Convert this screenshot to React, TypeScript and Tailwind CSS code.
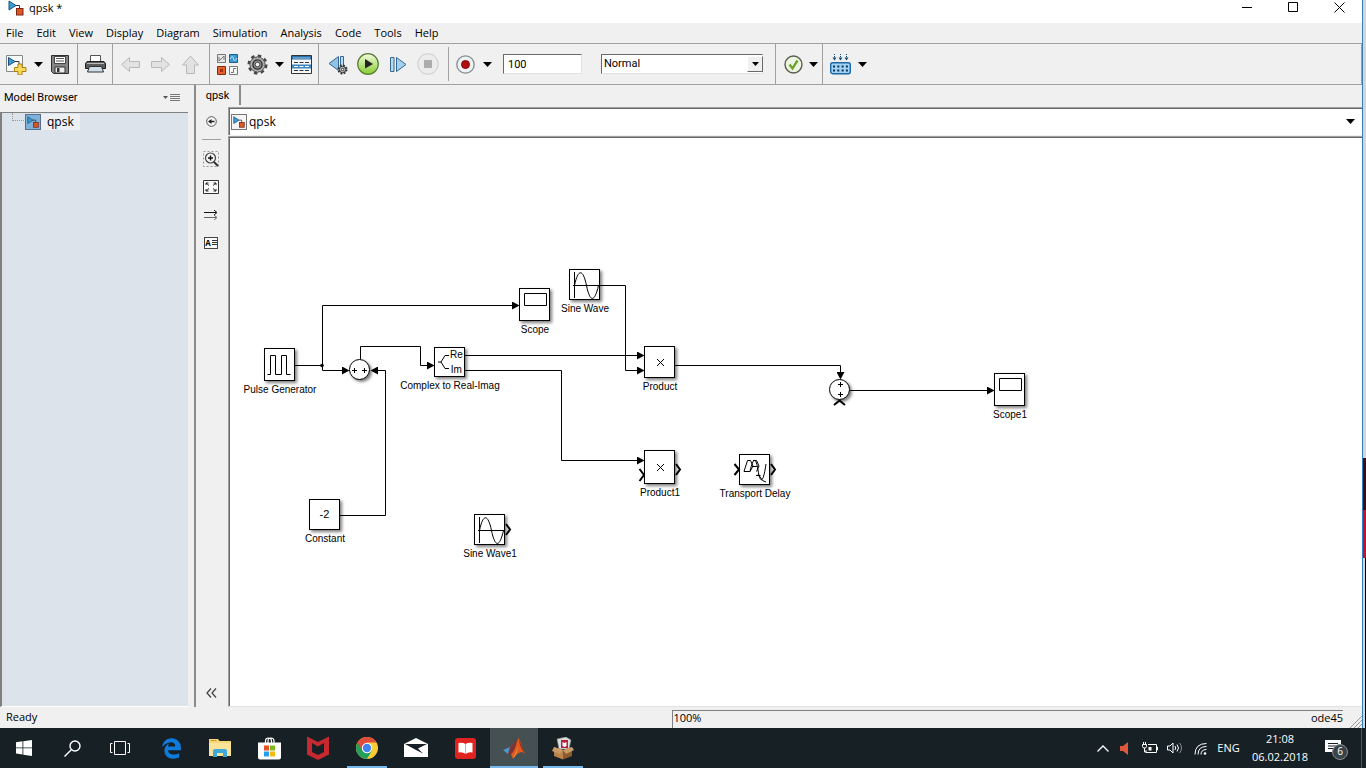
import type { ReactNode } from 'react'
import { FaEdgeLegacy } from 'react-icons/fa'

const MENUS = [
  'File',
  'Edit',
  'View',
  'Display',
  'Diagram',
  'Simulation',
  'Analysis',
  'Code',
  'Tools',
  'Help',
]

/* ---------- Shared bits ---------- */

function ModelIcon({ size = 15 }: { size?: number }) {
  return (
    <svg width={size} height={size} viewBox="0 0 16 16" className="shrink-0">
      <path d="M1 1v9l7-4.5z" fill="#3d9bd1" stroke="#1b557d" />
      <path d="M7.5 5.5h4V9" fill="none" stroke="#333" />
      <rect x="8.5" y="8.5" width="6.5" height="6.5" fill="#d9582b" stroke="#7c2410" />
    </svg>
  )
}

function BoxedModelIcon({ active = false }: { active?: boolean }) {
  return (
    <span
      className={`flex h-4 w-4 shrink-0 items-center justify-center border ${
        active ? 'border-[#56718c] bg-[#7fb0da]' : 'border-[#777] bg-[#f4f4f4]'
      }`}
    >
      <ModelIcon size={12} />
    </span>
  )
}

function Caret() {
  return (
    <svg width="9" height="5" viewBox="0 0 9 5">
      <path d="M0 0h9L4.5 5z" fill="#000" />
    </svg>
  )
}

function Tool({ label, wide, children }: { label: string; wide?: boolean; children: ReactNode }) {
  return (
    <button
      type="button"
      aria-label={label}
      className={`flex h-8 shrink-0 items-center justify-center ${wide ? 'w-[30px]' : 'w-6'}`}
    >
      {children}
    </button>
  )
}

function CaretTool({ label, narrow }: { label: string; narrow?: boolean }) {
  return (
    <button
      type="button"
      aria-label={label}
      className={`flex h-8 shrink-0 items-center justify-center ${narrow ? 'w-4' : 'w-5'}`}
    >
      <Caret />
    </button>
  )
}

/* ---------- Title bar + menu ---------- */

function TitleBar() {
  return (
    <header className="flex h-[23px] shrink-0 items-start overflow-hidden bg-white">
      <div className="flex flex-1 items-center gap-[5px] pl-2">
        <ModelIcon size={16} />
        <h1 className="text-[11px] leading-4">qpsk *</h1>
      </div>
      <button type="button" aria-label="Minimize" className="flex h-4 w-[46px] items-center justify-center">
        <svg width="10" height="10"><path d="M0 4.5h10" stroke="#000" /></svg>
      </button>
      <button type="button" aria-label="Maximize" className="flex h-[15px] w-[46px] items-center justify-center">
        <svg width="11" height="11"><path d="M.5.5h9v9h-9z" fill="none" stroke="#000" /></svg>
      </button>
      <button type="button" aria-label="Close" className="flex h-[15px] w-[46px] items-center justify-center">
        <svg width="11" height="11"><path d="M.5.5l10 10M10.5.5l-10 10" stroke="#000" /></svg>
      </button>
    </header>
  )
}

function MenuBar() {
  return (
    <nav className="flex h-5 shrink-0 items-center gap-[13px] pl-1.5">
      {MENUS.map(menu => (
        <button key={menu} type="button" className="text-[11px] leading-4">
          {menu}
        </button>
      ))}
    </nav>
  )
}

/* ---------- Toolbar ---------- */

function GearIcon({ size = 21 }: { size?: number }) {
  return (
    <svg width={size} height={size} viewBox="0 0 22 22">
      <circle cx="11" cy="11" r="9" fill="none" stroke="#444" strokeWidth="3" strokeDasharray="3.6 3.47" />
      <circle cx="11" cy="11" r="8" fill="#a9a9a9" stroke="#555" />
      <circle cx="11" cy="11" r="4.8" fill="#8b8b8b" stroke="#333" strokeWidth="1.4" />
      <circle cx="11" cy="11" r="2.4" fill="#f3f3f3" stroke="#444" />
    </svg>
  )
}

function BlockArrow({ d }: { d: string }) {
  return (
    <svg width="19" height="19" viewBox="0 0 19 19">
      <path d={d} fill="#e2e2e2" stroke="#b9b9b9" strokeLinejoin="round" />
    </svg>
  )
}

function Toolbar() {
  return (
    <div className="flex h-[42px] shrink-0 border-y border-r border-[#a0a0a0] bg-[#f0f0f0]">
      <div className="flex w-[78px] shrink-0 items-center border-r border-[#a0a0a0] pl-1">
        <Tool label="New model">
          <svg width="22" height="22" viewBox="0 0 22 22">
            <path d="M1.5 2.5h16v16h-16z" fill="#f7f9fb" stroke="#888" />
            <path d="M3.500 4.500v8l6.500-4z" fill="#3d9bd1" stroke="#1b557d" />
            <path d="M10 8.500h4v3" fill="none" stroke="#333" />
            <path d="M13 11h4v3.500h4v4h-4V22h-4v-3.500H9.500v-4H13z" fill="#fbd85a" stroke="#a98314" />
          </svg>
        </Tool>
        <CaretTool label="New options" />
        <Tool label="Save">
          <svg width="18" height="19" viewBox="0 0 18 19">
            <path d="M.5.5h17v18H2.500l-2-2z" fill="#858585" stroke="#2e2e2e" />
            <path d="M3.500 1.500h11v7h-11z" fill="#fff" stroke="#444" />
            <path d="M5 3.500h8M5 6h8" stroke="#555" />
            <path d="M4 12h10v6H4z" fill="#ededed" stroke="#333" />
            <path d="M6 13h2.500v4H6z" fill="#333" />
          </svg>
        </Tool>
      </div>

      <div className="flex w-[35px] shrink-0 items-center justify-center border-r border-[#a0a0a0]">
        <Tool label="Print">
          <svg width="21" height="20" viewBox="0 0 21 20">
            <path d="M5.500 8V1.500h10V8" fill="#fff" stroke="#555" />
            <path d="M2 7.500h17l1.500 2v5H.5v-5z" fill="#5b5b5b" stroke="#1d1d1d" />
            <path d="M2 9.500h17" stroke="#bbb" />
            <path d="M4.500 12.500h12l2 5.500H2.500z" fill="#cfdde8" stroke="#333" />
          </svg>
        </Tool>
      </div>

      <div className="flex w-[97px] shrink-0 items-center border-r border-[#a0a0a0] pl-0.5">
        <Tool label="Back" wide>
          <BlockArrow d="M.5 9.500l8-7v4h10v6h-10v4z" />
        </Tool>
        <Tool label="Forward" wide>
          <BlockArrow d="M18.500 9.500l-8-7v4H.5v6h10v4z" />
        </Tool>
        <Tool label="Up to parent" wide>
          <BlockArrow d="M9.500 1l8 9h-4v8.500h-8V10h-4z" />
        </Tool>
      </div>

      <div className="flex w-[109px] shrink-0 items-center border-r border-[#a0a0a0] pl-[5px]">
        <Tool label="Library browser">
          <svg width="21" height="21" viewBox="0 0 21 21">
            <path d="M.5.5h8v8h-8z" fill="#e7e7e7" stroke="#777" />
            <path d="M2 7V3m0 4l5-5v4" fill="none" stroke="#777" />
            <path d="M12.500.5h8v8h-8z" fill="#3c9ad0" stroke="#1d5f8c" />
            <path d="M13 5c2-4 3.500-2 3.500 0S19 7 20 4" fill="none" stroke="#c7ecff" />
            <path d="M.5 12.500h8v8h-8z" fill="#e3602f" stroke="#8b2a10" />
            <path d="M3 15h3v3H3z" fill="#a5300f" />
            <path d="M12.500 12.500h8v8h-8z" fill="#f7f7f7" stroke="#777" />
            <path d="M14 18.500h2.500v-4H19" fill="none" stroke="#777" />
          </svg>
        </Tool>
        <span className="w-1.5" />
        <Tool label="Model configuration">
          <GearIcon />
        </Tool>
        <CaretTool label="Configuration options" />
        <Tool label="Model explorer">
          <svg width="21" height="19" viewBox="0 0 21 19">
            <path d="M.5.5h20v18H.5z" fill="#f5f8fa" stroke="#333" />
            <path d="M1 1h19v3.500H1z" fill="#2d6fa8" />
            <path d="M2 3h17" stroke="#9ac6e8" />
            <path d="M3 7.500h4m1.500 0h4m1.500 0h4M3 15.500h4m1.500 0h4m1.500 0h4" stroke="#333" />
            <path d="M1 9.500h19v4H1z" fill="#3d86bf" />
            <path d="M3 11.500h4m1.500 0h4m1.500 0h4" stroke="#fff" />
          </svg>
        </Tool>
      </div>

      <div className="flex w-[129px] shrink-0 items-center pl-1">
        <Tool label="Step back" wide>
          <svg width="20" height="21" viewBox="0 0 20 21">
            <path d="M10.500 2.500v14L1 9.500z" fill="#8fc3e8" stroke="#36688f" />
            <path d="M12.500 2.500h3v14h-3z" fill="#b9dcf3" stroke="#36688f" />
            <circle cx="14.500" cy="15.500" r="4" fill="#ddd" stroke="#333" strokeWidth="2" strokeDasharray="1.800 1.350" />
            <circle cx="14.500" cy="15.500" r="3.200" fill="#bbb" stroke="#333" />
            <circle cx="14.500" cy="15.500" r="1.200" fill="#fff" stroke="#333" />
          </svg>
        </Tool>
        <Tool label="Run" wide>
          <svg width="22" height="22" viewBox="0 0 22 22">
            <defs>
              <linearGradient id="run" x1="0" y1="0" x2="0" y2="1">
                <stop offset="0" stopColor="#f3fbe0" />
                <stop offset="1" stopColor="#86cc2e" />
              </linearGradient>
            </defs>
            <circle cx="11" cy="11" r="10.300" fill="url(#run)" stroke="#587f34" strokeWidth="1.200" />
            <path d="M8 6v9.500L16 11z" fill="#222" />
          </svg>
        </Tool>
        <Tool label="Step forward" wide>
          <svg width="17" height="17" viewBox="0 0 17 17">
            <path d="M.5 1.500h3.500v14H.5z" fill="#b9dcf3" stroke="#36688f" />
            <path d="M6.500 1.500v14L16 8.500z" fill="#a5d1f0" stroke="#36688f" />
          </svg>
        </Tool>
        <Tool label="Stop" wide>
          <svg width="22" height="22" viewBox="0 0 22 22">
            <circle cx="11" cy="11" r="10.300" fill="#ececec" stroke="#cbcbcb" />
            <path d="M7 7h8v8H7z" fill="#adadad" />
          </svg>
        </Tool>
      </div>

      <div className="flex w-[328px] shrink-0 items-center border-r border-[#a0a0a0] font-[Roboto,sans-serif]">
        <span className="h-[34px] w-px bg-[#a0a0a0]" />
        <span className="w-1" />
        <Tool label="Record">
          <svg width="19" height="19" viewBox="0 0 19 19">
            <circle cx="9.500" cy="9.500" r="8.700" fill="#eef1f2" stroke="#7f8a90" strokeWidth="1.300" />
            <circle cx="9.500" cy="9.500" r="4" fill="#b30f0f" stroke="#7d0a0a" />
          </svg>
        </Tool>
        <CaretTool label="Record options" />
        <input
          type="text"
          aria-label="Stop time"
          defaultValue="100"
          className="ml-1.5 h-5 w-[79px] border border-[#e3e3e3] border-l-[#696969] border-t-[#696969] bg-white pl-1 text-[11px] outline-none"
        />
        <div className="relative ml-[19px] w-[162px]">
          <select
            aria-label="Simulation mode"
            className="block h-5 w-full appearance-none border border-[#e3e3e3] border-l-[#696969] border-t-[#696969] bg-white pl-0.5 text-[11px] outline-none"
          >
            <option>Normal</option>
          </select>
          <span className="pointer-events-none absolute right-0 top-0.5 flex h-4 w-4 items-center justify-center border border-white border-b-[#696969] border-r-[#696969] bg-[#f0f0f0]">
            <svg width="7" height="4"><path d="M0 0h7L3.500 4z" /></svg>
          </span>
        </div>
      </div>

      <div className="flex w-[47px] shrink-0 items-center border-r border-[#a0a0a0] pl-[5px]">
        <Tool label="Model advisor">
          <svg width="19" height="19" viewBox="0 0 19 19">
            <circle cx="9.500" cy="9.500" r="8.500" fill="#eef4e4" stroke="#55604a" strokeWidth="1.400" />
            <path d="M5.500 9.500l3 4 5-8" fill="none" stroke="#6ea32c" strokeWidth="2.400" />
          </svg>
        </Tool>
        <CaretTool label="Advisor options" narrow />
      </div>

      <div className="flex items-center pl-[5px]">
        <Tool label="Build model">
          <svg width="21" height="21" viewBox="0 0 21 21">
            <path d="M4.500 0v5m6-5v5m6-5v5" stroke="#14456f" strokeDasharray="1 1" />
            <path d="M2.500 3.500h4l-2 3zm6 0h4l-2 3zm6 0h4l-2 3z" fill="#14456f" />
            <rect x=".7" y="8.700" width="19.600" height="11" rx="2" fill="#9fd3f7" stroke="#2167a0" strokeWidth="1.400" />
            <path d="M3 12.500h15M3 16.500h15" stroke="#12324e" strokeWidth="2" strokeDasharray="2 2.300" />
          </svg>
        </Tool>
        <CaretTool label="Build options" />
      </div>
    </div>
  )
}

/* ---------- Model browser ---------- */

function ModelBrowser() {
  return (
    <aside className="flex w-[194px] shrink-0 flex-col">
      <div className="flex h-[27px] shrink-0 items-center justify-between pb-0.5 pl-1 pr-3.5">
        <h2 className="font-[Roboto,sans-serif] text-[11px] leading-4">Model Browser</h2>
        <button type="button" aria-label="Browser options">
          <svg width="17" height="8" viewBox="0 0 17 8">
            <path d="M0 2h5L2.500 5z" fill="#555" />
            <path d="M7 .5h10M7 2.500h10M7 4.500h10M7 6.500h10" stroke="#777" />
          </svg>
        </button>
      </div>
      <div className="mr-1.5 flex-1 border-b border-l-2 border-t border-[#808080] border-b-white bg-[#dce3eb]">
        <div className="flex h-[18px] items-center pl-2.5">
          <span className="h-2 w-3 self-start border-b border-l border-dotted border-[#999]" />
          <span className="ml-px">
            <BoxedModelIcon active />
          </span>
          <span className="bg-[#eceff3] px-1.5 text-xs leading-4">qpsk</span>
        </div>
      </div>
    </aside>
  )
}

/* ---------- Palette ---------- */

function Palette() {
  return (
    <div className="flex w-8 shrink-0 flex-col items-center pb-1.5 pr-0.5">
      <button type="button" aria-label="Hide browser" className="flex h-7 w-6 items-center justify-center">
        <svg width="11" height="11" viewBox="0 0 11 11">
          <circle cx="5.500" cy="5.500" r="4.800" fill="#f8f8f8" stroke="#555" />
          <path d="M8.500 5.500H3" stroke="#222" strokeWidth="1.500" />
          <path d="M2 5.500L5.500 3v5z" fill="#222" />
        </svg>
      </button>
      <span className="mb-[5px] mt-1 h-px w-[19px] bg-[#a0a0a0]" />
      <button type="button" aria-label="Zoom" className="flex h-7 w-6 items-center justify-center">
        <svg width="16" height="16" viewBox="0 0 16 16">
          <path d="M.5.5h15v15H.5z" fill="none" stroke="#999" strokeDasharray="2 2" />
          <circle cx="7.500" cy="7" r="5" fill="#f6f6f6" stroke="#444" strokeWidth="1.200" />
          <path d="M5 7h5M7.500 4.500v5" stroke="#111" strokeWidth="1.400" />
          <path d="M11 11l4 4" stroke="#333" strokeWidth="2" />
        </svg>
      </button>
      <button type="button" aria-label="Fit to view" className="flex h-7 w-6 items-center justify-center">
        <svg width="16" height="14" viewBox="0 0 16 14">
          <path d="M.5.5h15v13H.5z" fill="#fafafa" stroke="#333" />
          <path d="M3 5V3h2.500M10.500 3H13v2M13 9v2h-2.500M5.500 11H3V9" fill="none" stroke="#222" />
          <path d="M3 3l3 2.500M13 3l-3 2.500M3 11l3-2.500M13 11l-3-2.500" stroke="#222" />
        </svg>
      </button>
      <button type="button" aria-label="Signal labels" className="flex h-7 w-6 items-center justify-center">
        <svg width="14" height="10" viewBox="0 0 14 10">
          <path d="M0 2.500h12M10 0l3 2.500L10 5" fill="none" stroke="#111" />
          <path d="M0 7.500h12M10 5l3 2.500L10 10" fill="none" stroke="#666" />
        </svg>
      </button>
      <button type="button" aria-label="Annotation" className="flex h-7 w-6 items-center justify-center">
        <span className="flex h-3 w-3.5 items-center justify-center gap-px border border-[#444] bg-[#fafafa]">
          <span className="text-[8px] font-bold leading-none">A</span>
          <svg width="5" height="6"><path d="M0 .5h5M0 2.500h5M0 4.500h5" stroke="#333" /></svg>
        </span>
      </button>
      <span className="flex-1" />
      <button type="button" aria-label="Collapse palette" className="flex h-4 w-6 items-center justify-center">
        <svg width="11" height="10"><path d="M5 .5L1 5l4 4.500M10 .5L6 5l4 4.500" fill="none" stroke="#444" strokeWidth="1.300" /></svg>
      </button>
    </div>
  )
}

/* ---------- Diagram ---------- */

type Kind = 'pulse' | 'sum-h' | 'sum-v' | 'complex' | 'scope' | 'sine' | 'product' | 'delay' | 'constant'

interface Block {
  id: string
  kind: Kind
  x: number
  y: number
  h: number
  label?: string
}

const BLOCKS: Block[] = [
  { id: 'pulse', kind: 'pulse', x: 34, y: 209, h: 33, label: 'Pulse Generator' },
  { id: 'sum', kind: 'sum-h', x: 119, y: 220, h: 21 },
  { id: 'c2ri', kind: 'complex', x: 204, y: 208, h: 30, label: 'Complex to Real-Imag' },
  { id: 'scope', kind: 'scope', x: 289, y: 149, h: 33, label: 'Scope' },
  { id: 'sine', kind: 'sine', x: 339, y: 130, h: 31, label: 'Sine Wave' },
  { id: 'product', kind: 'product', x: 414, y: 207, h: 32, label: 'Product' },
  { id: 'product1', kind: 'product', x: 414, y: 311, h: 34, label: 'Product1' },
  { id: 'delay', kind: 'delay', x: 509, y: 315, h: 31, label: 'Transport Delay' },
  { id: 'sine1', kind: 'sine', x: 244, y: 375, h: 31, label: 'Sine Wave1' },
  { id: 'constant', kind: 'constant', x: 79, y: 360, h: 31, label: 'Constant' },
  { id: 'sum1', kind: 'sum-v', x: 599, y: 240, h: 21 },
  { id: 'scope1', kind: 'scope', x: 764, y: 234, h: 33, label: 'Scope1' },
]

// Each wire stops where its arrow head begins
const WIRES = [
  'M92.5 226.5V166.5H282',
  'M92.5 226.5V231.5H112',
  'M130.5 220V207.5H190.5V226.5H197',
  'M110 376.5H155.5V231.5H148',
  'M235 216.5H407',
  'M235 231.5H331.5V321.5H407',
  'M370 146.5H395.5V231.5H407',
  'M445 226.5H610.5V233',
  'M620 251.5H757',
]

// Unconnected ports
const PORTS = [
  'M409.500 330l4.500 6-4.500 6',
  'M446 325l4 5.500-4 5.500',
  'M504.500 325l4.500 5.500-4.500 5.500',
  'M541 325l4 5.500-4 5.500',
  'M276 385l4 5.500-4 5.500',
  'M604 266l5.500-4.500 5.500 4.500',
]

function Glyph({ kind }: { kind: Kind }) {
  switch (kind) {
    case 'pulse':
      return (
        <svg width="25" height="21" viewBox="0 0 25 21" fill="none" stroke="#000">
          <path d="M.5 20.500h3v-19h5v19h6v-19h5v19h4" />
        </svg>
      )
    case 'scope':
      return (
        <svg width="24" height="23" viewBox="0 0 24 23" fill="none" stroke="#000">
          <path d="M1.500.5h22v12h-22z" />
        </svg>
      )
    case 'sine':
      return (
        <svg width="29" height="29" viewBox="0 0 29 29" fill="none" stroke="#000">
          <path d="M4.500 2v26M3 15.500h26" />
          <path d="M4.500 15.500C8-1.500 13-1.500 16.500 15.500S24.500 33 28.500 15.500" />
        </svg>
      )
    case 'delay':
      return (
        <svg width="29" height="29" viewBox="0 0 29 29" fill="none" stroke="#000">
          <path d="M4 16.500L7.500 5.500H10.500L13 11 10 16.500z" />
          <path d="M10 16.500C13 2 16 2 18 15S23 30 26 9" />
          <path d="M13 5.500H16.500L19 11 16.500 16.500M12 11.500H17M16 20.500H20.500" />
          <path d="M18 19L21.500 24 22.500 25.500 26 27" />
        </svg>
      )
    case 'complex':
      return (
        <div className="flex w-full items-center">
          <svg width="13" height="16" viewBox="0 0 13 16" fill="none" stroke="#000" className="ml-0.5 shrink-0">
            <path d="M1 8h3l4-6.500h4M4 8l4 6.500h4" />
          </svg>
          <div className="flex flex-col items-center gap-1 text-[10px] leading-[11px]">
            <span>Re</span>
            <span>Im</span>
          </div>
        </div>
      )
    case 'product':
      return (
        <svg width="8" height="7" stroke="#000"><path d="M1 0l7 7M8 0L1 7" /></svg>
      )
    case 'constant':
      return <span className="text-[11px]">-2</span>
    case 'sum-h':
      return (
        <svg width="15" height="6" stroke="#000"><path d="M0 3.500h5M2.500 1v5M10 3.500h5M12.500 1v5" /></svg>
      )
    case 'sum-v':
      return (
        <svg width="6" height="15" stroke="#000"><path d="M1 2.500h5M3.500 0v5M1 12.500h5M3.500 10v5" /></svg>
      )
  }
}

function BlockNode({ block }: { block: Block }) {
  const round = block.kind === 'sum-h' || block.kind === 'sum-v'
  return (
    <div className="absolute" style={{ left: block.x, top: block.y }}>
      <div
        className={`flex items-center justify-center border border-black bg-white shadow-[2px_2px_3px_rgba(0,0,0,0.5)] ${
          round ? 'w-[21px] rounded-full' : 'w-[31px]'
        }`}
        style={{ height: block.h }}
      >
        <Glyph kind={block.kind} />
      </div>
      {block.label && (
        <span className="absolute left-4 top-full mt-[3px] -translate-x-1/2 whitespace-nowrap text-[10px] leading-3">
          {block.label}
        </span>
      )}
    </div>
  )
}

function Canvas() {
  return (
    <main className="relative flex-1 overflow-hidden border-b border-l border-t border-[#a0a0a0] border-b-[#e3e3e3] bg-white font-['Liberation_Sans',Arial,sans-serif] shadow-[inset_1px_1px_#696969]">
      <div className="absolute bottom-0 left-px right-0 top-0.5">
        {BLOCKS.map(block => (
          <BlockNode key={block.id} block={block} />
        ))}
        <svg className="pointer-events-none absolute inset-0 h-full w-full" fill="none" stroke="#000">
          <defs>
            <marker id="head" markerWidth="8" markerHeight="8" refX="0" refY="4" orient="auto" markerUnits="userSpaceOnUse">
              <path d="M0 0l7.500 4L0 8z" fill="#000" stroke="none" />
            </marker>
          </defs>
          <path d="M65 226.500H92.500" />
          <circle cx="92" cy="226.500" r="1.800" fill="#000" stroke="none" />
          {WIRES.map(d => (
            <path key={d} d={d} markerEnd="url(#head)" />
          ))}
          {PORTS.map(d => (
            <path key={d} d={d} strokeWidth="2" />
          ))}
        </svg>
      </div>
    </main>
  )
}

function Editor() {
  return (
    <section className="flex min-w-0 flex-1 flex-col border-l-2 border-[#8c8c8c]">
      <div className="flex h-[22px] shrink-0 items-start">
        <button
          type="button"
          className="h-5 w-[45px] border-r-2 border-[#8c8c8c] pt-0.5 font-[Roboto,sans-serif] text-[11px]"
        >
          qpsk
        </button>
      </div>
      <div className="flex flex-1">
        <Palette />
        <div className="flex min-w-0 flex-1 flex-col">
          <div className="flex h-7 shrink-0 items-center justify-between border-l border-t border-[#a0a0a0] bg-white pl-0.5 pr-[7px] shadow-[inset_1px_1px_#696969]">
            <div className="flex items-center gap-0.5">
              <BoxedModelIcon />
              <span className="text-xs leading-4">qpsk</span>
            </div>
            <button type="button" aria-label="Path history">
              <Caret />
            </button>
          </div>
          <div className="h-px shrink-0 bg-[#f0f0f0]" />
          <Canvas />
        </div>
      </div>
    </section>
  )
}

function StatusBar() {
  return (
    <footer className="flex h-[21px] shrink-0 items-end bg-[#f0f0f0] text-[11px]">
      <p className="flex-1 self-center">
        <span className="pl-1.5">Ready</span>
      </p>
      <div className="flex-1">
        <div className="flex h-[18px] items-center justify-between border-l border-t border-[#808080] pb-0.5 pl-px">
          <span>100%</span>
          <span>ode45</span>
        </div>
      </div>
      <svg width="19" height="13" className="shrink-0">
        <path d="M7 13L19 1M11 13l8-8M15 13l4-4" stroke="#999" />
      </svg>
    </footer>
  )
}

/* ---------- Taskbar ---------- */

function AppButton({
  label,
  state,
  children,
}: {
  label: string
  state?: 'open' | 'active'
  children: ReactNode
}) {
  return (
    <button
      type="button"
      aria-label={label}
      className={`flex h-10 w-12 shrink-0 flex-col items-center ${state === 'active' ? 'bg-[#455053]' : ''}`}
    >
      <span className="flex flex-1 items-center">{children}</span>
      {state === 'open' && <span className="-mt-0.5 h-0.5 w-10 bg-[#76b9ed]" />}
      {state === 'active' && <span className="-mt-0.5 h-0.5 w-full bg-[#76b9ed]" />}
    </button>
  )
}

function Taskbar() {
  return (
    <footer className="flex h-10 shrink-0 items-center bg-[#162025] text-white">
      <AppButton label="Start">
        <svg width="16" height="16" viewBox="0 0 16 16" fill="#fff">
          <path d="M0 2.200l6.500-.9v6.200H0zM7.300 1.200L16 0v7.500H7.300zM0 8.300h6.500v6.200L0 13.600zM7.300 8.300H16V16l-8.700-1.300z" />
        </svg>
      </AppButton>
      <AppButton label="Search">
        <svg width="17" height="17" viewBox="0 0 17 17" fill="none" stroke="#fff" strokeWidth="1.400">
          <circle cx="11" cy="6" r="5" />
          <path d="M7.300 9.700L.5 16.500" />
        </svg>
      </AppButton>
      <AppButton label="Task view">
        <svg width="20" height="14" viewBox="0 0 20 14" fill="none" stroke="#fff">
          <path d="M4.500.5h11v13h-11zM2.500 2.500h-2v9h2M17.500 2.500h2v9h-2" />
        </svg>
      </AppButton>

      <div className="ml-[3px] flex gap-px">
        <AppButton label="Edge">
          <FaEdgeLegacy size={21} color="#0f7bdc" />
        </AppButton>
        <AppButton label="File Explorer">
          <svg width="22" height="18" viewBox="0 0 22 18">
            <path d="M0 0h9l1.500 2H22v15H0z" fill="#f5d67b" />
            <path d="M0 4h22v13H0z" fill="#fbe49a" />
            <path d="M1.500 1.500h6" stroke="#d69c2f" />
            <path d="M4 18v-6q0-2 2-2h10q2 0 2 2v6h-4v-4H8v4z" fill="#3fa9dc" />
          </svg>
        </AppButton>
        <AppButton label="Store">
          <svg width="23" height="23" viewBox="0 0 23 23">
            <path d="M7.500 6V4q0-3 3-3t3 3v2M10 6V4q0-3 3-3t3 3v2" fill="none" stroke="#fff" strokeWidth="1.200" />
            <path d="M0 5.500h23v15q0 2-2 2H2q-2 0-2-2z" fill="#fff" />
            <path d="M6 8.500h5v5H6z" fill="#e8512a" />
            <path d="M12 8.500h5v5h-5z" fill="#7fba1c" />
            <path d="M6 14.500h5v5H6z" fill="#22a1e8" />
            <path d="M12 14.500h5v5h-5z" fill="#fbb813" />
          </svg>
        </AppButton>
        <AppButton label="McAfee">
          <svg width="22" height="24" viewBox="0 0 22 24">
            <path d="M0 .5L11 6 22 .5v18L11 24 0 18.500z" fill="#c62a30" />
            <path d="M5 7l6 3.500L17 7v9l-6 3-6-3z" fill="#162025" />
          </svg>
        </AppButton>
        <AppButton label="Chrome" state="open">
          <svg width="22" height="22" viewBox="0 0 22 22">
            <circle cx="11" cy="11" r="11" fill="#fbcc34" />
            <path d="M11 11L1.500 5.500A11 11 0 0 0 11 22l4.800-8.200z" fill="#22a05a" />
            <path d="M11 11V5.500h9.500A11 11 0 0 0 1.500 5.500L6.200 13.800z" fill="#df4a3b" />
            <circle cx="11" cy="11" r="5.200" fill="#fff" />
            <circle cx="11" cy="11" r="4.200" fill="#4285ec" />
          </svg>
        </AppButton>
        <AppButton label="Mail">
          <svg width="24" height="20" viewBox="0 0 24 20">
            <path d="M0 6L12 0l12 6v13H0z" fill="#fff" />
            <path d="M1 6h22l-9 4.500 5 5L12 12z" fill="#162025" />
          </svg>
        </AppButton>
        <AppButton label="Reader">
          <svg width="21" height="21" viewBox="0 0 21 21">
            <rect width="21" height="21" rx="3" fill="#e0231f" />
            <path d="M3.500 5q4-1 7 1 3-2 7-1v9.500q-4-1-7 1.500-3-2.500-7-1.500z" fill="#fff" />
            <path d="M10.500 6v10" stroke="#e9a19f" />
          </svg>
        </AppButton>
        <AppButton label="MATLAB" state="active">
          <svg width="22" height="21" viewBox="0 0 22 21">
            <path d="M0 12l7-3 5-5-1 8-6 4z" fill="#4a98cf" />
            <path d="M7 9l8-9-3 12-4 5-3-1z" fill="#7e3431" />
            <path d="M15.500 0c2 3 4 11 6.500 15l-4-1-4 2-4 5-2-5c4-2 5-11 7.500-16z" fill="#df5a20" />
            <path d="M15.500 0c0 5-.5 12-5.500 20 4-3 5-10 5.500-20z" fill="#fbb040" />
            <path d="M15.500 1c2 4 4 10 6 13.500-2-1.500-4-5-6-13.500z" fill="#8e2115" />
          </svg>
        </AppButton>
        <AppButton label="WinRAR package" state="open">
          <svg width="22" height="23" viewBox="0 0 22 23">
            <path d="M5 2l9-2 5 3-2 9H7z" fill="#ddd" stroke="#888" strokeWidth=".6" />
            <path d="M9 3h7v8H9z" fill="#b6213c" />
            <path d="M10.500 5l2 1 2-1v4l-2 1-2-1z" fill="#fff" />
            <path d="M2 10l9 3v9.500l-9-3.500z" fill="#b9834c" />
            <path d="M11 13l9-3v9l-9 3.500z" fill="#8c5a2c" />
            <path d="M2 10L0 14l8 3 3-4zM20 10l2 3-8 4-3-4z" fill="#c99a66" />
          </svg>
        </AppButton>
      </div>

      <div className="ml-auto flex h-full items-center">
        <button type="button" aria-label="Show hidden icons" className="flex w-6 justify-center">
          <svg width="12" height="7"><path d="M.5 6.500L6 1l5.500 5.500" fill="none" stroke="#fff" strokeWidth="1.300" /></svg>
        </button>
        <button type="button" aria-label="Audio manager" className="flex w-[19px] justify-center">
          <svg width="10" height="13"><path d="M0 4h3l5-4v13L3 9H0z" fill="#e0583c" /></svg>
        </button>
        <button type="button" aria-label="Battery" className="flex w-8 justify-center">
          <svg width="16" height="12" viewBox="0 0 16 12" fill="none" stroke="#fff">
            <path d="M6 2.500h8.500v8H4V8M14.500 5h1v3h-1M.5 2.500h4v2q0 1.500-2 1.500t-2-1.500zM1.500 0v2M3.500 0v2M2.500 6v4H4" />
            <path d="M6.500 5h3v3.500h-3z" fill="#fff" stroke="none" />
          </svg>
        </button>
        <button type="button" aria-label="Volume" className="flex w-[18px] justify-center">
          <svg width="16" height="12" viewBox="0 0 16 12" fill="none" stroke="#fff">
            <path d="M.5 4h2.500L6 1v10L3 8H.5zM8 4q1.500 2 0 4M10 2.500q3 3.500 0 7" />
            <path d="M12.500 1q4 5 0 10" stroke="#8a9093" />
          </svg>
        </button>
        <button type="button" aria-label="Network" className="flex w-[33px] justify-center">
          <svg width="13" height="13" viewBox="0 0 13 13" fill="none" stroke="#fff">
            <path d="M1 12.500Q1 1.500 12.500 1.500M4 12.500Q4 4.500 12.500 4.500M7 12.500Q7 7.500 12.500 7.500" />
            <circle cx="11" cy="11.500" r="1.300" fill="#fff" stroke="none" />
          </svg>
        </button>
        <button type="button" className="w-[23px] text-[11px]">
          ENG
        </button>
        <time className="w-20 text-center text-[11px] leading-[18px]">
          21:08
          <br />
          06.02.2018
        </time>
        <button type="button" aria-label="Notifications" className="relative ml-[5px] mr-[13px] h-6 w-[23px]">
          <svg width="16" height="16" viewBox="0 0 16 16">
            <path d="M0 0h16v12h-4v3.500L8.500 12H0z" fill="#fff" />
            <path d="M3 3.500h10M3 6h10M3 8.500h7" stroke="#162025" />
          </svg>
          <span className="absolute bottom-0 right-0 flex h-4 w-4 items-center justify-center rounded-full border border-[#8a9093] bg-[#3b4549] text-[10px]">
            6
          </span>
        </button>
        <span className="h-full w-[5px] border-l border-[#4c565a]" />
      </div>
    </footer>
  )
}

export default function App() {
  return (
    <div className="flex min-h-screen w-full flex-col overflow-hidden bg-[#f0f0f0] font-['Open_Sans','Noto_Sans',sans-serif] text-xs text-black">
      <div className="flex flex-1">
        <div className="flex min-w-0 flex-1 flex-col">
          <TitleBar />
          <MenuBar />
          <Toolbar />
          <div className="flex flex-1">
            <ModelBrowser />
            <Editor />
          </div>
          <StatusBar />
        </div>
        {/* Sliver of the windows behind */}
        <div className="flex w-1 shrink-0 flex-col border-l border-[#2f7fc1] bg-[#d5d5d5]">
          <span className="h-[458px]" />
          <span className="h-[52px] bg-[#3a0d14]" />
          <span className="h-12 bg-[#c01530]" />
          <span className="flex-1 border-r border-black" />
        </div>
      </div>
      <Taskbar />
    </div>
  )
}
